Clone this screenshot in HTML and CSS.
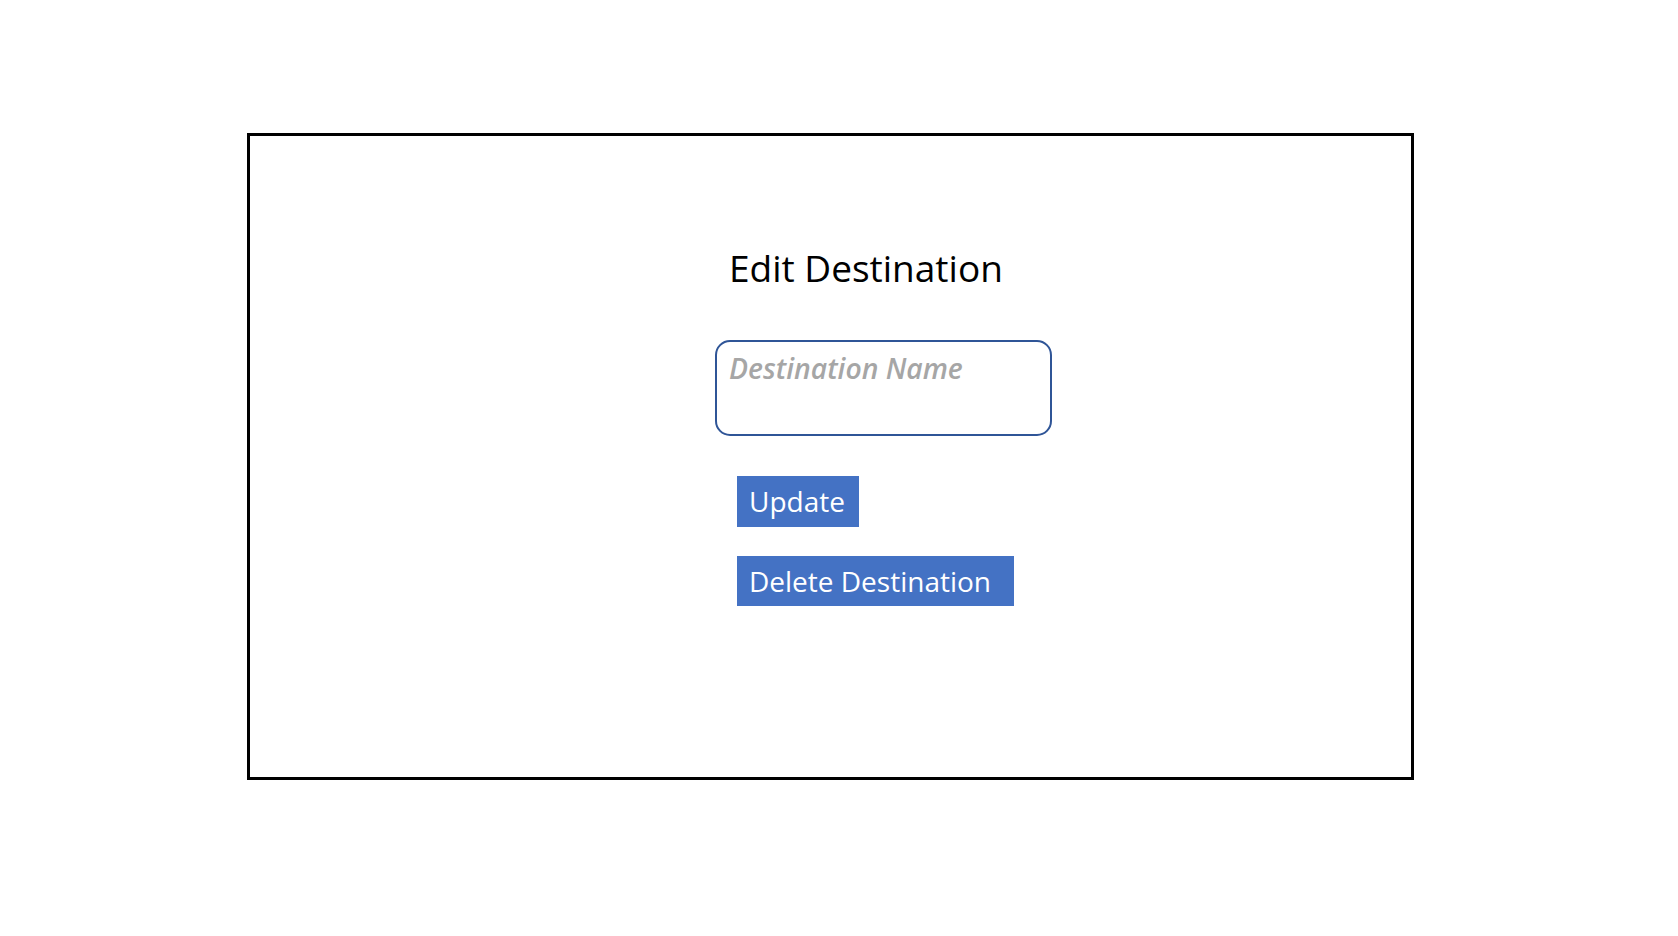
FILE: index.html
```html
<!DOCTYPE html>
<html lang="en">
<head>
<meta charset="utf-8">
<title>Edit Destination</title>
<link rel="stylesheet" href="styles.css">
</head>
<body>
<main class="frame">
  <section class="form">
    <h1 class="title">Edit Destination</h1>
    <textarea class="name-field" placeholder="Destination Name"></textarea>
    <button class="btn btn-update" type="button">Update</button>
    <button class="btn btn-delete" type="button">Delete Destination</button>
  </section>
</main>
</body>
</html>
```

FILE: styles.css
```css
html, body {
  margin: 0;
  padding: 0;
  background: #ffffff;
}

body {
  font-family: "Open Sans", "Noto Sans", sans-serif;
  width: 1678px;
  height: 936px;
  overflow: hidden;
}

.frame {
  box-sizing: border-box;
  margin: 133px 0 0 247px;
  width: 1167px;
  height: 647px;
  border: 3px solid #000000;
}

.form {
  display: flex;
  flex-direction: column;
  align-items: flex-start;
  padding: 107px 0 0 465px;
}

.title {
  margin: 0 0 0 14px;
  font-size: 37px;
  line-height: 50px;
  font-weight: 500;
  color: #000000;
}

.name-field {
  display: block;
  box-sizing: border-box;
  margin: 47px 0 0 0;
  width: 337px;
  height: 96px;
  padding: 7px 10px 0 12px;
  border: 2px solid #2f5597;
  border-radius: 15px;
  font-family: inherit;
  font-size: 28.3px;
  line-height: 38px;
  resize: none;
  outline: none;
  background: #ffffff;
}

.name-field::placeholder {
  color: #a6a6a6;
  font-style: italic;
  font-weight: 600;
  opacity: 1;
}

.btn {
  display: block;
  box-sizing: border-box;
  margin: 0 0 0 22px;
  padding: 0 0 0 12px;
  border: none;
  border-radius: 0;
  background: #4472c4;
  color: #ffffff;
  font-family: inherit;
  font-size: 28px;
  text-align: left;
  cursor: pointer;
}

.btn-update {
  margin-top: 40px;
  width: 122px;
  height: 51px;
  line-height: 51px;
}

.btn-delete {
  margin-top: 29px;
  width: 277px;
  height: 50px;
  line-height: 50px;
}
```
